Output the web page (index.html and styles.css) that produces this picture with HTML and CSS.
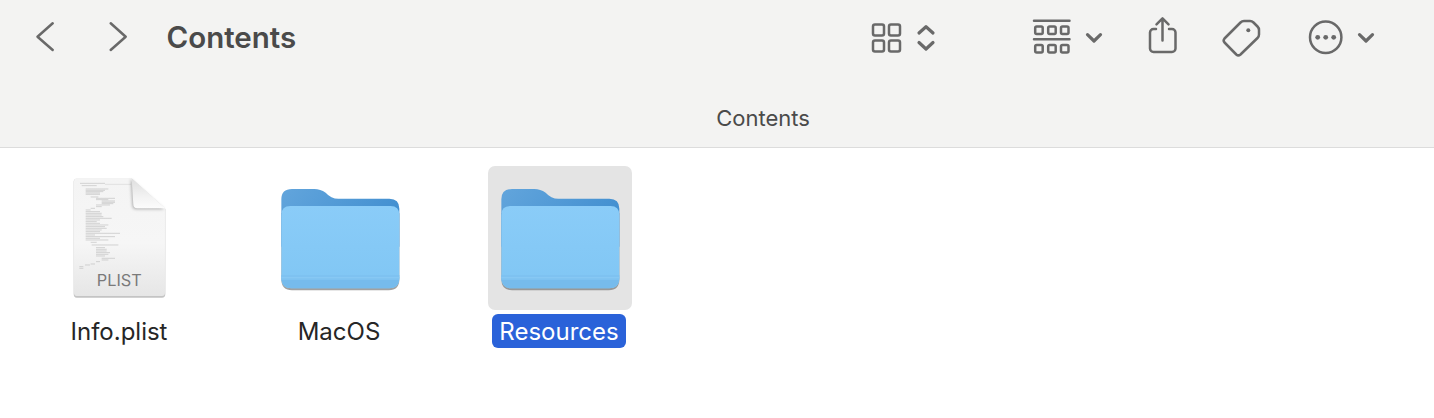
FILE: index.html
```html
<!DOCTYPE html>
<html lang="en">
<head>
<meta charset="utf-8">
<title>Contents</title>
<link rel="stylesheet" href="styles.css">
</head>
<body>
<header class="toolbar">
  <div class="tools">
    <svg class="icon w-back" viewBox="30 0 30 75"><path d="M52.7 23.3 37.5 36.7 52.7 50"/></svg>
    <svg class="icon w-forward" viewBox="104 0 28 75"><path d="M110.7 23.3 125.7 36.7 110.7 50"/></svg>
    <h1 class="title">Contents</h1>
    <svg class="icon w-view" viewBox="865 0 75 75">
      <rect x="873" y="24.5" width="11" height="11" rx="2"/><rect x="889" y="24.5" width="11" height="11" rx="2"/>
      <rect x="873" y="40.5" width="11" height="11" rx="2"/><rect x="889" y="40.5" width="11" height="11" rx="2"/>
      <path class="bold" d="M919 33 926 26.7 933 33M919 42.5 926 49 933 42.5"/>
    </svg>
    <svg class="icon w-group" viewBox="1028 0 80 75">
      <path d="M1034 20.7H1069.5M1034 39.3H1069.5"/>
      <rect x="1035.2" y="26.5" width="7.5" height="7.5" rx="1.5"/><rect x="1048.2" y="26.5" width="7.5" height="7.5" rx="1.5"/><rect x="1061" y="26.5" width="7.5" height="7.5" rx="1.5"/>
      <rect x="1035.2" y="45" width="7.5" height="7.5" rx="1.5"/><rect x="1048.2" y="45" width="7.5" height="7.5" rx="1.5"/><rect x="1061" y="45" width="7.5" height="7.5" rx="1.5"/>
      <path class="bold" d="M1087.5 34.7 1094 41 1100.5 34.7"/>
    </svg>
    <svg class="icon w-share" viewBox="1142 0 42 75">
      <path d="M1156 29H1153.5A3.5 3.5 0 0 0 1150 32.500V48.500A3.500 3.500 0 0 0 1153.500 52H1172A3.500 3.500 0 0 0 1175.500 48.500V32.500A3.500 3.500 0 0 0 1172 29H1169M1162.500 40.500V18.500M1156.500 24.300 1162.500 18.300 1168.500 24.300"/>
    </svg>
    <svg class="icon w-tag" viewBox="1216 0 50 75">
      <path d="M1224.500 38.500 1240.500 22.500Q1242 21 1244 21H1250Q1252 21 1253.500 22.500L1257.500 26.500Q1259 28 1259 30V34.500Q1259 36.500 1257.500 38L1240.500 54.500Q1238.300 56.300 1236.300 54.500L1224.500 42.500Q1222.800 40.500 1224.500 38.500Z"/>
      <circle class="solid" cx="1248.300" cy="30.300" r="2"/>
    </svg>
    <svg class="icon w-more" viewBox="1303 0 77 75">
      <circle cx="1325.700" cy="37.300" r="15.700"/>
      <circle class="solid" cx="1317.700" cy="37.300" r="2.400"/><circle class="solid" cx="1325.700" cy="37.300" r="2.400"/><circle class="solid" cx="1333.700" cy="37.300" r="2.400"/>
      <path class="bold" d="M1359.500 34.700 1366 41 1372.500 34.700"/>
    </svg>
  </div>
  <div class="path-label">Contents</div>
</header>
<main class="files">
  <figure class="file">
    <div class="tile">
      <svg class="doc" viewBox="60 30 300 370">
        <defs>
          <linearGradient id="docfill" x1="0" y1="0" x2="0" y2="1"><stop offset="0" stop-color="#f4f4f4"/><stop offset=".55" stop-color="#f6f6f6"/><stop offset="1" stop-color="#e6e6e6"/></linearGradient>
          <linearGradient id="foldfill" x1="0" y1="0" x2="0" y2="1"><stop offset="0" stop-color="#dedede"/><stop offset=".6" stop-color="#f2f2f2"/><stop offset="1" stop-color="#fcfcfc"/></linearGradient>
        </defs>
        <path class="doc-edge" d="M80 41H245L346 132V387Q346 398 336 398H80Q71 398 71 387V50Q71 41 80 41Z"/>
        <path class="doc-body" d="M80 40H245L345 130V384Q345 393 336 393H80Q72 393 72 384V49Q72 40 80 40Z"/>
        <path class="doc-lines" d="M90 55H165M95 62H140M107 72H175M107 76H165M107 80H160M107 84H150M107 88H150M122 96H145M138 100H195M138 104H175M155 108H195M155 112H195M155 116H190M138 120H180M138 125H155M122 130H135M107 135H122M107 140H150M107 145H155M107 150H155M107 155H160M107 160H185M107 165H150M107 170H140M107 175H150M107 180H175M107 185H165M107 190H170M107 195H155M107 200H150M107 205H210M107 210H135M107 215H195M107 220H150M107 225H175M122 232H140M125 240H205M138 248H165M138 253H170M138 258H170M138 263H180M138 268H175M138 273H165M155 280H195M155 285H175M138 290H150M122 297H135M105 300H120M88 305H100M88 310H100"/>
        <path class="doc-lines faint" d="M165 58H243"/>
        <path class="doc-fold" d="M245 40 345 130H262Q250 130 250 118Z"/>
        <text class="doc-type" x="208" y="362">PLIST</text>
      </svg>
    </div>
    <figcaption class="name">Info.plist</figcaption>
  </figure>
  <figure class="file">
    <div class="tile">
      <svg class="folder" viewBox="20 15 380 330">
        <defs>
          <linearGradient id="backfill" x1="0" y1="0" x2="1" y2="0.4"><stop offset="0" stop-color="#62a5dc"/><stop offset="1" stop-color="#428fd0"/></linearGradient>
          <linearGradient id="frontfill" x1="0" y1="0" x2="0" y2="1"><stop offset="0" stop-color="#8accf8"/><stop offset="1" stop-color="#80c6f4"/></linearGradient>
          <g id="foldershape">
            <path fill="#6e6e6e" opacity=".65" d="M33 100H387V298Q387 331 355 331H65Q33 331 33 298Z"/>
            <path fill="url(#backfill)" d="M33 58Q33 27 65 27H132Q150 27 166 38Q182 56 204 56H357Q387 56 387 86V200H33Z"/>
            <path fill="url(#frontfill)" d="M33 105Q33 78 60 78H360Q387 78 387 105V295Q387 325 357 325H63Q33 325 33 295Z"/>
            <path fill="#7ec2f1" d="M33 285H387V295Q387 300 386 304H34Q33 300 33 295Z"/>
            <path fill="#76bbec" d="M34 300H386Q383 325 357 325H63Q37 325 34 300Z"/>
            <path fill="#8bcaf4" d="M33 292H387V295H33Z"/>
          </g>
        </defs>
        <use href="#foldershape"/>
      </svg>
    </div>
    <figcaption class="name">MacOS</figcaption>
  </figure>
  <figure class="file selected">
    <div class="tile">
      <svg class="folder" viewBox="20 15 380 330"><use href="#foldershape"/></svg>
    </div>
    <figcaption class="name">Resources</figcaption>
  </figure>
</main>
</body>
</html>
```

FILE: styles.css
```css
* {
  box-sizing: border-box;
}

html,
body {
  margin: 0;
  height: 100%;
  background: #fff;
  overflow: hidden;
}

body {
  font-family: Inter, "Liberation Sans", sans-serif;
  color: #262626;
}

.toolbar {
  height: 148px;
  background: #f3f3f2;
  border-bottom: 1px solid #dcdcdc;
  display: flex;
  flex-direction: column;
}

.tools {
  height: 75px;
  display: flex;
  align-items: center;
  padding: 0 54px 0 30px;
}

.icon {
  height: 75px;
  flex: none;
  fill: none;
  stroke: #696969;
  stroke-width: 2.5;
  stroke-linecap: round;
  stroke-linejoin: round;
}

.icon .bold {
  stroke-width: 3.2;
}

.icon .solid {
  fill: #696969;
  stroke: none;
}

.w-back { width: 30px; }
.w-forward { width: 28px; margin-left: 44px; }
.w-view { width: 75px; margin-left: auto; }
.w-group { width: 80px; margin-left: 88px; }
.w-share { width: 42px; margin-left: 34px; }
.w-tag { width: 50px; margin-left: 32px; }
.w-more { width: 77px; margin-left: 37px; }

.title {
  margin: 0 0 0 34.5px;
  font-size: 29.5px;
  font-weight: 600;
  color: #4a4a4a;
  line-height: 75px;
}

.path-label {
  padding-left: 92px;
  padding-top: 26px;
  text-align: center;
  font-size: 22px;
  line-height: 34px;
  color: #4a4a4a;
}

.files {
  display: flex;
  gap: 76px;
  padding: 18px 0 0 48px;
}

.file {
  margin: 0;
  width: 144px;
  display: flex;
  flex-direction: column;
  align-items: center;
}

.tile {
  width: 144px;
  height: 144px;
  border-radius: 7px;
  display: flex;
  align-items: center;
  justify-content: center;
}

.selected .tile {
  background: #e4e4e4;
}

.doc {
  width: 100px;
  height: 123.3px;
  flex: none;
  margin-bottom: 2.7px;
}

.doc-edge {
  fill: #c4c4c4;
}

.doc-body {
  fill: url(#docfill);
}

.doc-lines {
  fill: none;
  stroke: #bcbcbc;
  stroke-width: 1.9;
}

.doc-lines.faint {
  stroke: #d4d4d4;
}

.doc-fold {
  fill: url(#foldfill);
  filter: drop-shadow(-3px 3px 5px rgba(0, 0, 0, .28));
}

.doc-type {
  font-size: 49px;
  fill: #7a7a7a;
  text-anchor: middle;
}

.folder {
  width: 126.7px;
  height: 110px;
  flex: none;
  margin-top: 4px;
}

.name {
  margin: 4px 2px 0 0;
  padding: 0 7px;
  height: 34px;
  border-radius: 6px;
  font-size: 24px;
  line-height: 35px;
  white-space: nowrap;
}

.selected .name {
  background: #2a62d9;
  color: #fff;
}
```
